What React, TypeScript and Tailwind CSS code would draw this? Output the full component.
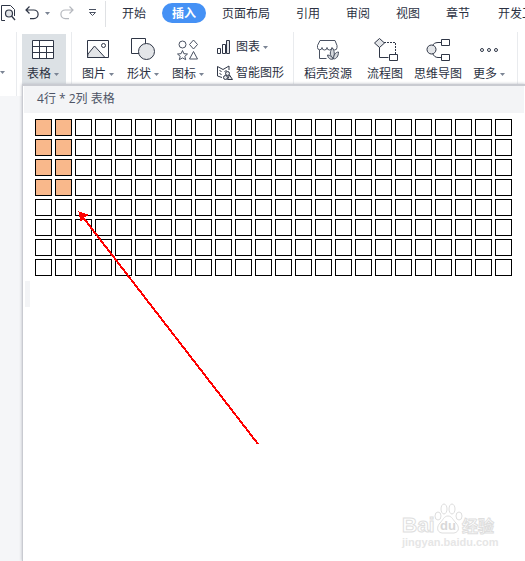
import { useState } from "react";
import type { ReactNode } from "react";

const ROWS = 8;
const COLS = 24;

const Caret = () => (
  <svg width="5" height="3" viewBox="0 0 5 3" className="shrink-0 fill-[#7b8494]">
    <path d="M0 0h5L2.5 3z" />
  </svg>
);

const Divider = () => <div className="w-px self-stretch bg-[#e9ebee]" />;

const PreviewIcon = () => (
  <svg width="16" height="16" viewBox="0 0 16 16" fill="none" stroke="#2f3646">
    <path d="M5 15.5H1.5V.5h9l4 4V11" />
    <circle cx="9" cy="8.5" r="3.5" fill="#e3e5e8" strokeWidth="1.2" />
    <path d="m11.500 11 3.500 4" strokeWidth="1.4" />
  </svg>
);

const UndoIcon = ({ className = "" }: { className?: string }) => (
  <svg width="14" height="14" viewBox="0 0 14 14" fill="none" strokeWidth="1.2" className={className}>
    <path d="M4.5.5 1 4l3.500 3.500M1 4h7.800a4.300 4.300 0 0 1 0 8.600H5" />
  </svg>
);

const TableIcon = () => (
  <svg width="24" height="22" viewBox="0 0 24 22" fill="none" stroke="#2f3646">
    <path fill="#fff" d="M1.500 1.500h21v18h-21z" />
    <path d="M1.500 7.500h21M1.500 13.500h21M8.500 1.500v18M15.500 7.500v12" />
  </svg>
);

const PictureIcon = () => (
  <svg width="24" height="22" viewBox="0 0 24 22" fill="none" stroke="#2f3646">
    <path d="M1.500 1.500h21v17h-21z" />
    <path fill="#e3e5e8" d="m2 15 6.500-8L19 18.500H1.500z" />
    <circle cx="17.500" cy="6.500" r="2" />
  </svg>
);

const ShapesIcon = () => (
  <svg width="26" height="24" viewBox="0 0 26 24" fill="none" stroke="#2f3646">
    <path d="M1.500.5h14v15h-14z" />
    <circle cx="16.500" cy="13.500" r="8" fill="#e3e5e8" />
  </svg>
);

const GlyphsIcon = () => (
  <svg width="22" height="22" viewBox="0 0 22 22" fill="none" stroke="#4a5262">
    <circle cx="5.500" cy="5.500" r="3.500" />
    <path d="m16.500 1 4 4.500-4 4.500-4-4.500z" />
    <path d="m5.500 11.500 1.400 3.200 3.600.3-2.700 2.300.9 3.400-3.200-1.800-3.200 1.800.9-3.400L.5 15l3.600-.3zM16.500 12.500l4 7.500h-8z" />
  </svg>
);

const ChartIcon = () => (
  <svg width="14" height="16" viewBox="0 0 14 16" fill="none" stroke="#2f3646">
    <path d="M.5 9.500h3v5h-3zM5.500 5.500h3v9h-3z" />
    <path fill="#e3e5e8" d="M9.500 1.500h3v13h-3z" />
  </svg>
);

const SmartArtIcon = () => (
  <svg width="16" height="16" viewBox="0 0 16 16" fill="none" stroke="#2f3646">
    <path d="M5 12.500.5 11V1.500l5.500 3 6-3.500v4M2.500 5.500l2 1M7.500 6.500l2-1M2.500 8.500l2 1" />
    <circle cx="10.500" cy="8.500" r="2" fill="#e3e5e8" />
    <circle cx="8.500" cy="12.500" r="2" fill="#e3e5e8" />
    <path fill="#e3e5e8" d="m12.500 10 3 4.500h-5z" />
  </svg>
);

const StoreIcon = () => (
  <svg width="24" height="22" viewBox="0 0 24 22" fill="none" stroke="#4a5262">
    <path d="M4 1.500h15l2 5v2a2.500 2.500 0 0 1-5 0 2.500 2.500 0 0 1-5 0 2.500 2.500 0 0 1-5 0 2.200 2.200 0 0 1-4.500 0v-2zM3.500 11v8.500h7" />
    <path fill="#d5d8dc" d="M17 19c-4-3-3-7-.5-10 2 3 2.500 7 .5 10z" />
    <path fill="#d5d8dc" d="M17 20c-3 1-5-1-5.500-4 2.500 0 4.500 1.500 5.500 4zM17.500 20c0-4 2-7 5-7 0 4-2 7-5 7z" />
  </svg>
);

const FlowIcon = () => (
  <svg width="25" height="24" viewBox="0 0 25 24" fill="none" stroke="#2f3646">
    <path d="M6.500 9v10.500h9" />
    <path strokeDasharray="2 1" d="M11 4.500h11.500V16" />
    <path fill="#e3e5e8" d="m6.500.5 5 4.500-5 4.500-5-4.500z" />
    <path fill="#fff" d="M16.500 16.500h8v6h-8z" />
  </svg>
);

const MindMapIcon = () => (
  <svg width="24" height="24" viewBox="0 0 24 24" fill="none" stroke="#2f3646">
    <path d="M15 4.500h-3C9 4.500 7 6 6.500 8M6.500 15c1 3 3 4.500 5.500 4.500h3" />
    <circle cx="5.500" cy="11.500" r="4.500" fill="#e3e5e8" />
    <path fill="#fff" d="M15.500 1.500h8v6h-8zM15.500 16.500h8v6h-8z" />
  </svg>
);

const MoreIcon = () => (
  <svg width="20" height="6" viewBox="0 0 20 6" fill="none" stroke="#2f3646">
    <circle cx="3" cy="3" r="1.500" />
    <circle cx="10" cy="3" r="1.500" />
    <circle cx="17" cy="3" r="1.500" />
  </svg>
);

type RibbonButtonProps = {
  icon: ReactNode;
  label: string;
  caret?: boolean;
  active?: boolean;
};

const RibbonButton = ({ icon, label, caret, active }: RibbonButtonProps) => (
  <button
    type="button"
    className={`flex flex-col items-center shrink-0 pt-1 ${active ? "bg-[#dce1e5] w-11 pr-[2px]" : ""}`}
  >
    <span className="flex h-6 items-center justify-center">{icon}</span>
    <span className="mt-1 flex h-4 items-center gap-[3px] whitespace-nowrap">
      {label}
      {caret && <Caret />}
    </span>
  </button>
);

const TABS = ["开始", "插入", "页面布局", "引用", "审阅", "视图", "章节", "开发工具"];

const TabBar = () => (
  <div className="flex h-7 overflow-hidden">
    <div className="flex h-[26px] w-[105px] shrink-0 items-center">
      <button type="button" aria-label="打印预览">
        <PreviewIcon />
      </button>
      <button type="button" aria-label="撤销" className="ml-[9px]">
        <UndoIcon className="stroke-[#2f3646]" />
      </button>
      <button type="button" aria-label="撤销列表" className="ml-[6px]">
        <Caret />
      </button>
      <button type="button" aria-label="恢复" className="ml-[10px]">
        <UndoIcon className="-scale-x-100 stroke-[#b5b8be]" />
      </button>
      <button type="button" aria-label="自定义" className="ml-[14px]">
        <svg width="9" height="8" viewBox="0 0 9 8" fill="none" stroke="#4a5262">
          <path d="M1 .5h7M1.500 3.500h6l-3 3z" />
        </svg>
      </button>
    </div>
    <div className="my-px w-px shrink-0 bg-[#dfe1e4]" />
    <nav className="flex items-start gap-[6px] pl-[6px] pt-[3px]">
      {TABS.map((tab) => (
        <button
          key={tab}
          type="button"
          className={`h-5 shrink-0 rounded-full px-[10px] pt-px last:ml-[2px] ${
            tab === "插入" ? "bg-[#4591f5] font-bold text-white" : ""
          }`}
        >
          {tab}
        </button>
      ))}
    </nav>
  </div>
);

const Ribbon = () => (
  <div className="flex h-[68px] overflow-hidden pt-1">
    <div className="flex w-4 shrink-0 items-end pb-[22px]">
      <Caret />
    </div>
    <Divider />
    <div className="flex h-[62px] shrink-0 items-stretch pl-[5px] pt-[2px]">
      <RibbonButton icon={<TableIcon />} label="表格" caret active />
    </div>
    <div className="ml-[5px] flex">
      <Divider />
    </div>
    <div className="flex shrink-0 items-start gap-[13px] pl-[10px] pt-[2px]">
      <RibbonButton icon={<PictureIcon />} label="图片" caret />
      <RibbonButton icon={<ShapesIcon />} label="形状" caret />
      <RibbonButton icon={<GlyphsIcon />} label="图标" caret />
      <div className="flex flex-col gap-[10px] pt-[5px]">
        <button type="button" className="flex h-4 items-center gap-[3px] whitespace-nowrap">
          <span className="w-4">
            <ChartIcon />
          </span>
          图表
          <Caret />
        </button>
        <button type="button" className="flex h-4 items-center gap-[3px] whitespace-nowrap">
          <span className="w-4">
            <SmartArtIcon />
          </span>
          智能图形
        </button>
      </div>
    </div>
    <div className="ml-[9px] flex">
      <Divider />
    </div>
    <div className="flex shrink-0 items-start gap-[11px] pl-[10px] pr-3 pt-[2px]">
      <div className="mr-1">
        <RibbonButton icon={<StoreIcon />} label="稻壳资源" />
      </div>
      <RibbonButton icon={<FlowIcon />} label="流程图" />
      <RibbonButton icon={<MindMapIcon />} label="思维导图" />
      <RibbonButton icon={<MoreIcon />} label="更多" caret />
    </div>
    <Divider />
  </div>
);

const TablePicker = () => {
  const [size, setSize] = useState({ rows: 4, cols: 2 });

  return (
    <div className="absolute top-[84px] right-0 bottom-0 left-[22px] overflow-hidden border-t-2 border-l border-[#c9cbd1] bg-white pl-px shadow-[0_0_3px_#b8bbc2]">
      <div className="mr-px h-[27px] bg-[#f3f4f6] pl-[13px] font-['Open_Sans','Noto_Sans_CJK_SC',sans-serif] leading-[26px] text-[#4d5466]">
        {size.rows}行 * {size.cols}列 表格
      </div>
      <div className="grid grid-cols-[repeat(24,17px)] gap-[3px] pl-[11px] pt-[6px]">
        {Array.from({ length: ROWS * COLS }, (_, i) => {
          const row = Math.floor(i / COLS) + 1;
          const col = (i % COLS) + 1;
          const selected = row <= size.rows && col <= size.cols;
          return (
            <button
              key={i}
              type="button"
              aria-label={`${row}行${col}列`}
              onClick={() => setSize({ rows: row, cols: col })}
              className={`size-[17px] border border-black ${selected ? "bg-[#f9b88b]" : "bg-white"}`}
            />
          );
        })}
      </div>
      <div className="mt-[5px] ml-px h-[26px] w-[5px] bg-[#f3f4f6]" />
    </div>
  );
};

const Arrow = () => (
  <svg
    width="184"
    height="236"
    viewBox="0 0 184 236"
    className="pointer-events-none absolute top-[210px] left-[76px]"
    shapeRendering="crispEdges"
  >
    <path d="M6 6 182 234" stroke="#f00" strokeWidth="2" />
    <path d="m3 2 9 3-4 2-3 4z" fill="#f00" stroke="#f00" />
  </svg>
);

const Watermark = () => (
  <svg
    width="100"
    height="50"
    viewBox="0 0 100 50"
    className="pointer-events-none absolute right-6 bottom-[10px]"
    fill="#fff"
    stroke="#dedede"
    fontFamily="'Liberation Sans', 'Noto Sans CJK SC', sans-serif"
    fontWeight="bold"
  >
    <text x="1" y="31" fontSize="21">Bai</text>
    <ellipse cx="37" cy="15" rx="3" ry="4" />
    <ellipse cx="43" cy="8" rx="3" ry="5" />
    <ellipse cx="51" cy="8" rx="3" ry="5" />
    <ellipse cx="58" cy="15" rx="3" ry="4" />
    <path d="M47 15c4 0 5 4 8 7s4 9-2 10H41c-6-1-5-7-2-10s4-7 8-7z" />
    <text x="39" y="29" fontSize="13" fill="#d8d8d8" stroke="none">du</text>
    <text x="61" y="31" fontSize="16">经验</text>
    <text x="1" y="45" fontSize="11" fill="#e6e6e6" stroke="none">jingyan.baidu.com</text>
  </svg>
);

const App = () => {
  return (
    <div className="relative flex min-h-screen flex-col overflow-hidden bg-[#f5f6f8] font-['Liberation_Sans','Noto_Sans_CJK_SC',sans-serif] text-xs text-[#2b3142]">
      <header className="bg-white">
        <TabBar />
        <Ribbon />
      </header>
      <TablePicker />
      <Arrow />
      <Watermark />
    </div>
  );
};

export default App;
